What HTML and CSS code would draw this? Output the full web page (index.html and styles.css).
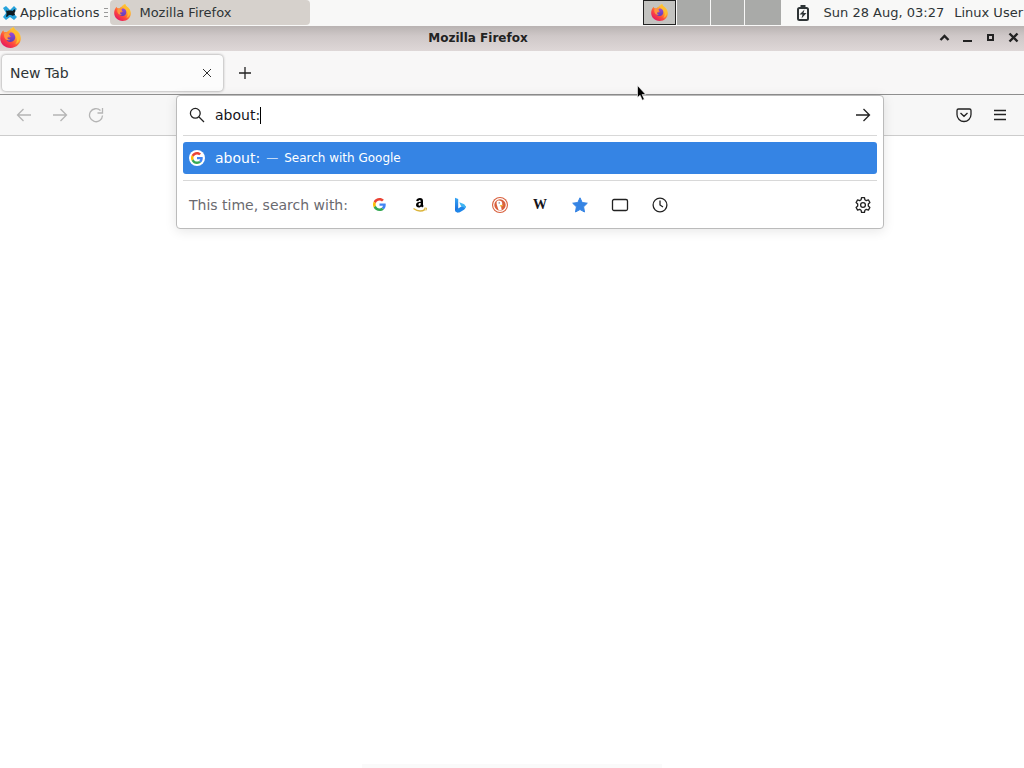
FILE: index.html
```html
<!DOCTYPE html>
<html lang="en">
<head>
  <meta charset="UTF-8" />
  <meta name="viewport" content="width=device-width, initial-scale=1.0"/>
  <title>Mozilla Firefox</title>
  <link rel="stylesheet" href="styles.css">
</head>
<body>

  <!-- shared icons -->
  <svg class="defs" width="0" height="0" aria-hidden="true">
    <defs>
      <linearGradient id="fx-body" x1="0.85" y1="0.1" x2="0.2" y2="0.95">
        <stop offset="0" stop-color="#ffe04a"/>
        <stop offset="0.35" stop-color="#ffa02e"/>
        <stop offset="0.65" stop-color="#ff4a3c"/>
        <stop offset="1" stop-color="#e31664"/>
      </linearGradient>
      <linearGradient id="fx-globe" x1="0.5" y1="0" x2="0.5" y2="1">
        <stop offset="0" stop-color="#a04ad8"/>
        <stop offset="1" stop-color="#5b3fb8"/>
      </linearGradient>
      <linearGradient id="bing-blue" x1="0" y1="0" x2="0" y2="1">
        <stop offset="0" stop-color="#37a6f5"/>
        <stop offset="1" stop-color="#1566d8"/>
      </linearGradient>
    </defs>
    <symbol id="firefox" viewBox="0 0 20 20">
      <path fill="url(#fx-body)" d="M3.2 3.1c.2 1 .5 1.600 1 2 .8-.3 1.700-.3 2.400-.1C7.200 4 8 3.200 9.200 2.800 10.500 1.300 11.800.5 13.200.1c.1 1.300.8 2.200 2 3.100 2.600 1.500 4.500 4 4.600 7.300.2 5.300-4.200 9.400-9.700 9.400C4.400 19.900.2 15.700.2 10.600.2 7.400 1.300 4.900 3.200 3.100z"/>
      <path fill="#ffbd2e" d="M13.200.1c.1 1.300.8 2.200 2 3.100 2.800 2 4 4.400 3.700 7.700-.5 2.700-2.100 4.700-4.400 5.500 2-2.200 2.200-4.800.8-7.200-1-1.900-3.300-3-3.800-5.200-.3-1.500.5-2.900 1.700-3.900z"/>
      <path fill="url(#fx-globe)" d="M10.300 4.900c2.500.2 4.200 2.300 4.200 4.700 0 2.600-1.900 4.600-4.400 4.600-2.700 0-4.600-1.900-4.600-4.300l2.800.1c.8 0 1.600-.5 2.100-1.200-1.100-.2-1.700-.8-1.900-1.500.3-.9 1-1.900 1.800-2.400z"/>
      <path fill="#ff9640" d="M4.200 6.100c1.500-.6 3.200-.3 4.100.8.3.4.6.6 1.200.7-.1.900-.7 1.300-1.600 1.500-.2.400-.5.800-.9 1.100.3 1.400 1.400 2.100 2.900 1.600-1.500 1.500-4.400.900-5.400-1.300-.7-1.500-.9-3.100-.3-4.400z"/>
    </symbol>
    <symbol id="google" viewBox="0 0 48 48">
      <path fill="#EA4335" d="M24 9.500c3.540 0 6.710 1.220 9.210 3.600l6.850-6.850C35.900 2.380 30.470 0 24 0 14.620 0 6.510 5.380 2.560 13.220l7.980 6.190C12.430 13.720 17.740 9.500 24 9.500z"/>
      <path fill="#4285F4" d="M46.980 24.550c0-1.570-.15-3.090-.38-4.550H24v9.020h12.940c-.58 2.960-2.260 5.480-4.780 7.180l7.730 6c4.510-4.180 7.090-10.360 7.090-17.650z"/>
      <path fill="#FBBC05" d="M10.530 28.590c-.48-1.450-.76-2.990-.76-4.590s.27-3.140.76-4.590l-7.980-6.190C.92 16.460 0 20.120 0 24s.92 7.540 2.560 10.780l7.970-6.190z"/>
      <path fill="#34A853" d="M24 48c6.480 0 11.930-2.130 15.890-5.810l-7.730-6c-2.150 1.450-4.920 2.300-8.160 2.300-6.260 0-11.570-4.220-13.470-9.910l-7.980 6.190C6.510 42.620 14.620 48 24 48z"/>
    </symbol>
  </svg>

  <header class="panel">
    <button class="apps">
      <svg width="16" height="16" viewBox="0 0 16 16">
        <path fill="#27a3dc" d="M1 3l3-2 4 4 4-4 3 3-4 4 4 4-3 3-4-3-4 3-3-3 3-4z"/>
        <path fill="#0d1b22" d="M4 5l1 1c2-.7 4-.6 5.500-.1L12.500 4l1 2-1 2 .5 2-2.500.7-1.500-.8-2 .2-2 2-1-.5.600-2.500z"/>
      </svg>
      Applications
    </button>
    <span class="grip"></span>
    <button class="task">
      <svg width="17" height="17"><use href="#firefox"/></svg>
      Mozilla Firefox
    </button>
    <div class="pager">
      <button class="desk desk--active" aria-label="Workspace 1"><svg width="17" height="17"><use href="#firefox"/></svg></button>
      <button class="desk" aria-label="Workspace 2"></button>
      <button class="desk" aria-label="Workspace 3"></button>
      <button class="desk" aria-label="Workspace 4"></button>
    </div>
    <svg class="battery" width="14" height="18" viewBox="0 0 14 18">
      <path fill="#2e3436" d="M4.500 1h5v3h-5z"/>
      <rect x="2" y="4" width="10" height="12" rx="1.500" fill="none" stroke="#2e3436" stroke-width="2"/>
      <path fill="#2e3436" d="M8.500 5.500L3.500 10.500h3l-1 4 5-5.500h-3z"/>
    </svg>
    <time class="clock">Sun 28 Aug, 03:27</time>
    <button class="user">Linux User</button>
  </header>

  <div class="titlebar">
    <svg class="app-icon" width="21" height="21"><use href="#firefox"/></svg>
    <h1>Mozilla Firefox</h1>
    <div class="win-buttons">
      <button aria-label="Shade"><svg width="11" height="11" viewBox="0 0 11 11"><path d="M1.500 8l4-4 4 4" fill="none" stroke="#222" stroke-width="2.400"/></svg></button>
      <button aria-label="Minimize"><svg width="11" height="11" viewBox="0 0 11 11"><path d="M1 9h9" stroke="#222" stroke-width="2"/></svg></button>
      <button aria-label="Maximize"><svg width="11" height="11" viewBox="0 0 11 11"><path d="M3 3h5v5H3z" fill="none" stroke="#222" stroke-width="2"/></svg></button>
      <button aria-label="Close"><svg width="11" height="11" viewBox="0 0 11 11"><path d="M1.500 1.500l8 8M9.500 1.500l-8 8" stroke="#222" stroke-width="2.400"/></svg></button>
    </div>
  </div>

  <div class="tabs">
    <div class="tab">
      <span>New Tab</span>
      <button class="tab-close" aria-label="Close tab"><svg width="10" height="10" viewBox="0 0 10 10"><path d="M1 1l8 8M9 1l-8 8" stroke="#333" stroke-width="1"/></svg></button>
    </div>
    <button class="tab-new" aria-label="Open a new tab"><svg width="12" height="12" viewBox="0 0 12 12"><path d="M6 0v12M0 6h12" stroke="#222" stroke-width="1.300"/></svg></button>
  </div>

  <nav class="toolbar">
    <button class="tool" disabled aria-label="Back"><svg width="16" height="16" viewBox="0 0 16 16"><path d="M15 8H1.500M7.500 2l-6 6 6 6"/></svg></button>
    <button class="tool" disabled aria-label="Forward"><svg width="16" height="16" viewBox="0 0 16 16"><path d="M1 8h13.500M8.500 2l6 6-6 6"/></svg></button>
    <button class="tool" disabled aria-label="Reload"><svg width="16" height="16" viewBox="0 0 16 16"><path d="M12.500 3.500A6.500 6.500 0 1 0 14.500 8.500M14.500 1v5h-5"/></svg></button>

    <div class="urlbar">
      <div class="popup">
        <div class="field">
          <svg class="line" width="16" height="16" viewBox="0 0 16 16"><circle cx="6.300" cy="6.300" r="4.900"/><path d="M10 10l5 5"/></svg>
          <input type="text" id="url" value="about:" aria-label="Search or enter address">
          <span class="caret"></span>
          <button class="icon-btn" aria-label="Go"><svg class="line" width="16" height="16" viewBox="0 0 16 16"><path d="M1 8h13.500M8.500 2l6 6-6 6"/></svg></button>
        </div>
        <button class="result">
          <span class="favicon"><svg width="12" height="12"><use href="#google"/></svg></span>
          <span class="query">about:</span>
          <span class="dash">—</span>
          <span class="action">Search with Google</span>
        </button>
        <div class="engines">
          <span class="engines-label">This time, search with:</span>
          <button class="engine" aria-label="Google"><svg width="13" height="13"><use href="#google"/></svg></button>
          <button class="engine" aria-label="Amazon">
            <svg width="16" height="16" viewBox="0 0 16 16">
              <path fill="#000" fill-rule="evenodd" d="M8.700 4.600c0-1-.2-1.600-1-1.600-.7 0-1.100.4-1.300 1.200L4.200 4C4.500 2 6 1.100 8 1.100c2 0 3 .9 3 3v3.300c0 .7.300 1.100.8 1.700l-1.600 1.400-1.100-1.100c-.7.800-1.400 1.100-2.400 1.100-1.500 0-2.700-.9-2.700-2.500 0-2.200 1.900-3.100 4.700-3.200zm0 1.300c-1.300 0-2.200.4-2.200 1.600 0 .8.400 1.200 1 1.200.8 0 1.200-.8 1.200-1.900z"/>
              <path d="M1.500 11.500c4 3 8.500 3 11.700.8" fill="none" stroke="#dcb53c" stroke-width="1.400"/>
              <path d="M12 11.300l2.500-.3-.5 2.500" fill="none" stroke="#dcb53c"/>
            </svg>
          </button>
          <button class="engine" aria-label="Bing">
            <svg width="16" height="16" viewBox="0 0 16 16">
              <path fill="url(#bing-blue)" d="M3 .8l3.200 1.300v9.400L8.500 13 6 15.200c-1.600.3-3-.8-3-2.400z"/>
              <path fill="#1f86ea" d="M6.200 11.500l3.500-2.200 4-.2c.1 1.600-.6 2.800-1.700 3.600l-3.800 2.200c-2 1-4.200.6-5-1.200z"/>
              <path fill="#3fb4f2" d="M7.300 5.300l3.800 1.500c1.700.7 2.600 1.900 2.600 3.500l-.5 1L8.800 8.800z"/>
            </svg>
          </button>
          <button class="engine" aria-label="DuckDuckGo">
            <svg width="16" height="16" viewBox="0 0 16 16">
              <circle cx="8" cy="8" r="8" fill="#d9603d"/>
              <circle cx="8" cy="8" r="6.300" fill="none" stroke="#fff" stroke-width="1.200"/>
              <path fill="#fff" d="M4.600 4.700c.8-1.400 3-1.700 4.400-.6 1.300 1 1.400 2.200 1.200 3.700L9 9l.7 3.900-2.700.6C5.900 11.500 5 8.500 4.600 6.700z"/>
              <path fill="#f3b63a" d="M7.800 8.200l3.500-.4-.7 1.500-2.600.3z"/>
              <circle cx="7.200" cy="5.900" r=".6" fill="#31405a"/>
            </svg>
          </button>
          <button class="engine engine--wiki" aria-label="Wikipedia">W</button>
          <button class="engine" aria-label="Bookmarks"><svg width="16" height="16" viewBox="0 0 16 16"><path fill="#3584e4" stroke="#3584e4" stroke-linejoin="round" d="M8 .8l2.200 4.700 5.100.7-3.700 3.600.9 5.200L8 12.500 3.500 15l.9-5.200L.7 6.200l5.100-.7z"/></svg></button>
          <button class="engine" aria-label="Tabs"><svg class="line" width="18" height="14" viewBox="0 0 18 14"><rect x="1.500" y="1.500" width="15" height="11" rx="1.500"/></svg></button>
          <button class="engine" aria-label="History"><svg class="line" width="16" height="16" viewBox="0 0 16 16"><circle cx="8" cy="8" r="6.900"/><path d="M8 3.500V8l3 2"/></svg></button>
          <button class="icon-btn" aria-label="Change search settings">
            <svg class="line" width="16" height="16" viewBox="0 0 16 16">
              <path stroke-linejoin="round" d="M6.500.7h3l.4 2.100 1.400.8 2.100-.7 1.500 2.600L13.300 7v2l1.600 1.500-1.500 2.600-2.100-.7-1.400.8-.4 2.100h-3l-.4-2.100-1.400-.8-2.100.7-1.500-2.600L2.700 9V7L1.100 5.500l1.500-2.600 2.100.7 1.400-.8z"/>
              <circle cx="8" cy="8" r="2.400"/>
            </svg>
          </button>
        </div>
      </div>
    </div>

    <button class="tool" aria-label="Save to Pocket"><svg width="16" height="16" viewBox="0 0 16 16"><path d="M2.500 2h11A1.500 1.500 0 0 1 15 3.500V7.500a7 7 0 0 1-14 0V3.500A1.500 1.500 0 0 1 2.500 2zM4.500 6L8 9.300 11.500 6"/></svg></button>
    <button class="tool" aria-label="Open application menu"><svg width="16" height="16" viewBox="0 0 16 16"><path d="M2 3.500h12M2 7.500h12M2 12.500h12"/></svg></button>
  </nav>

  <main class="page"></main>
  <footer class="dock"></footer>

  <svg class="pointer" width="10" height="16" viewBox="0 0 10 16"><path fill="#000" stroke="#fff" stroke-width=".6" d="M.5.500v12l2.600-2.300 2.200 5 2-.9-2.200-4.800h3.600z"/></svg>

</body>
</html>
```
FILE: styles.css
```css
* {
  box-sizing: border-box;
}
body {
  margin: 0;
  min-height: 100vh;
  display: flex;
  flex-direction: column;
  background: #fff;
  color: #2e3436;
  font-family: "DejaVu Sans", sans-serif;
  font-size: 13px;
  overflow: hidden;
}
button {
  padding: 0;
  border: none;
  background: none;
  color: inherit;
  font: inherit;
  display: flex;
  align-items: center;
}
svg {
  display: block;
  flex: none;
}
.defs {
  position: absolute;
}

/* desktop panel */
.panel {
  display: flex;
  align-items: center;
  height: 26px;
  padding-bottom: 1px;
  background: #f8f8f7;
  white-space: nowrap;
}
.apps {
  gap: 2px;
  padding-left: 2px;
}
.grip {
  width: 4px;
  height: 10px;
  margin: 0 2px 0 5px;
  background: repeating-linear-gradient(#999 0 1px, transparent 1px 4px);
}
.task {
  width: 200px;
  height: 25px;
  gap: 8px;
  padding-left: 4px;
  border-radius: 4px;
  background: #d6d1cc;
}
.pager {
  display: flex;
  gap: 1px;
  margin-left: auto;
}
.desk {
  width: 33px;
  height: 25px;
  background: #a9aaa8;
  justify-content: center;
}
.desk:last-child {
  width: 36px;
}
.desk--active {
  border: 1px solid #222;
  background: #c3c3c0;
}
.battery {
  margin: 0 14px 0 15px;
}
.user {
  margin: 0 1px 0 10px;
}

/* window title */
.titlebar {
  display: flex;
  align-items: center;
  height: 25px;
  background: linear-gradient(#b9b3b2, #cfc8c8 40%, #ded7d7);
}
.app-icon {
  margin-bottom: 3px;
}
.titlebar h1 {
  flex: 1;
  margin: 0;
  padding-right: 4px;
  color: #222;
  font-size: 12px;
  text-align: center;
  line-height: 24px;
  height: 25px;
}
.win-buttons {
  display: flex;
  gap: 12px;
  padding: 0 5px 2px 0;
}

/* tab strip */
.tabs {
  display: flex;
  align-items: center;
  height: 44px;
  padding-left: 2px;
  background: #f8f7f7;
  border-bottom: 1px solid #8f8f8f;
  font-size: 14px;
}
.tab {
  display: flex;
  align-items: center;
  justify-content: space-between;
  width: 221px;
  height: 36px;
  padding: 0 11px 0 8px;
  border-radius: 4px;
  background: #fcfcfc;
  box-shadow: 0 0 3px rgba(0, 0, 0, 0.45);
}
.tab-new {
  margin-left: 16px;
}

/* navigation */
.toolbar {
  display: flex;
  align-items: center;
  height: 41px;
  padding: 0 6px;
  background: #f7f7f7;
  border-bottom: 1px solid #ccc;
}
.tool {
  width: 36px;
  height: 36px;
  justify-content: center;
}
.tool svg,
.line {
  fill: none;
  stroke: #222;
  stroke-width: 1.3;
}
.tool:disabled svg {
  stroke: #b5b5b5;
}
.urlbar {
  flex: 1;
  align-self: flex-start;
  margin: 0 62px;
  position: relative;
}

/* address popup */
.popup {
  position: absolute;
  top: 0;
  left: 0;
  right: 0;
  padding: 0 6px;
  border: 1px solid #bbb;
  border-radius: 4px;
  background: #fff;
  color: #15141a;
  font-size: 14px;
  box-shadow: 0 2px 12px rgba(0, 0, 0, 0.1);
}
.field {
  display: flex;
  align-items: center;
  height: 40px;
  padding: 0 0 1px 6px;
  border-bottom: 1px solid #d8d8d8;
}
.field input {
  field-sizing: content;
  margin-left: 10px;
  padding: 0;
  border: none;
  outline: none;
  background: none;
  color: inherit;
  font: inherit;
}
.caret {
  width: 1px;
  height: 17px;
  background: #000;
}
.icon-btn {
  margin-left: auto;
  padding-right: 6px;
}
.result {
  width: 100%;
  height: 32px;
  margin: 6px 0;
  padding-left: 6px;
  border-radius: 3px;
  background: #3584e4;
  color: #fff;
}
.favicon {
  display: flex;
  align-items: center;
  justify-content: center;
  width: 16px;
  height: 16px;
  margin-right: 10px;
  border-radius: 50%;
  background: #fff;
}
.dash {
  margin: 0 6px;
  font-size: 12px;
  opacity: 0.7;
}
.action {
  font-size: 12px;
}
.engines {
  display: flex;
  align-items: center;
  height: 48px;
  padding-left: 6px;
  border-top: 1px solid #d8d8d8;
}
.engines-label {
  margin-right: 12px;
  color: #6a6a6f;
}
.engine {
  width: 40px;
  height: 32px;
  justify-content: center;
}
.engine--wiki {
  font-family: "Liberation Serif", serif;
  font-size: 14px;
  font-weight: bold;
}

.page {
  flex: 1;
}
.dock {
  align-self: center;
  width: 300px;
  height: 4px;
  background: #fafafa;
}
.pointer {
  position: absolute;
  left: 637px;
  top: 85px;
}
```
